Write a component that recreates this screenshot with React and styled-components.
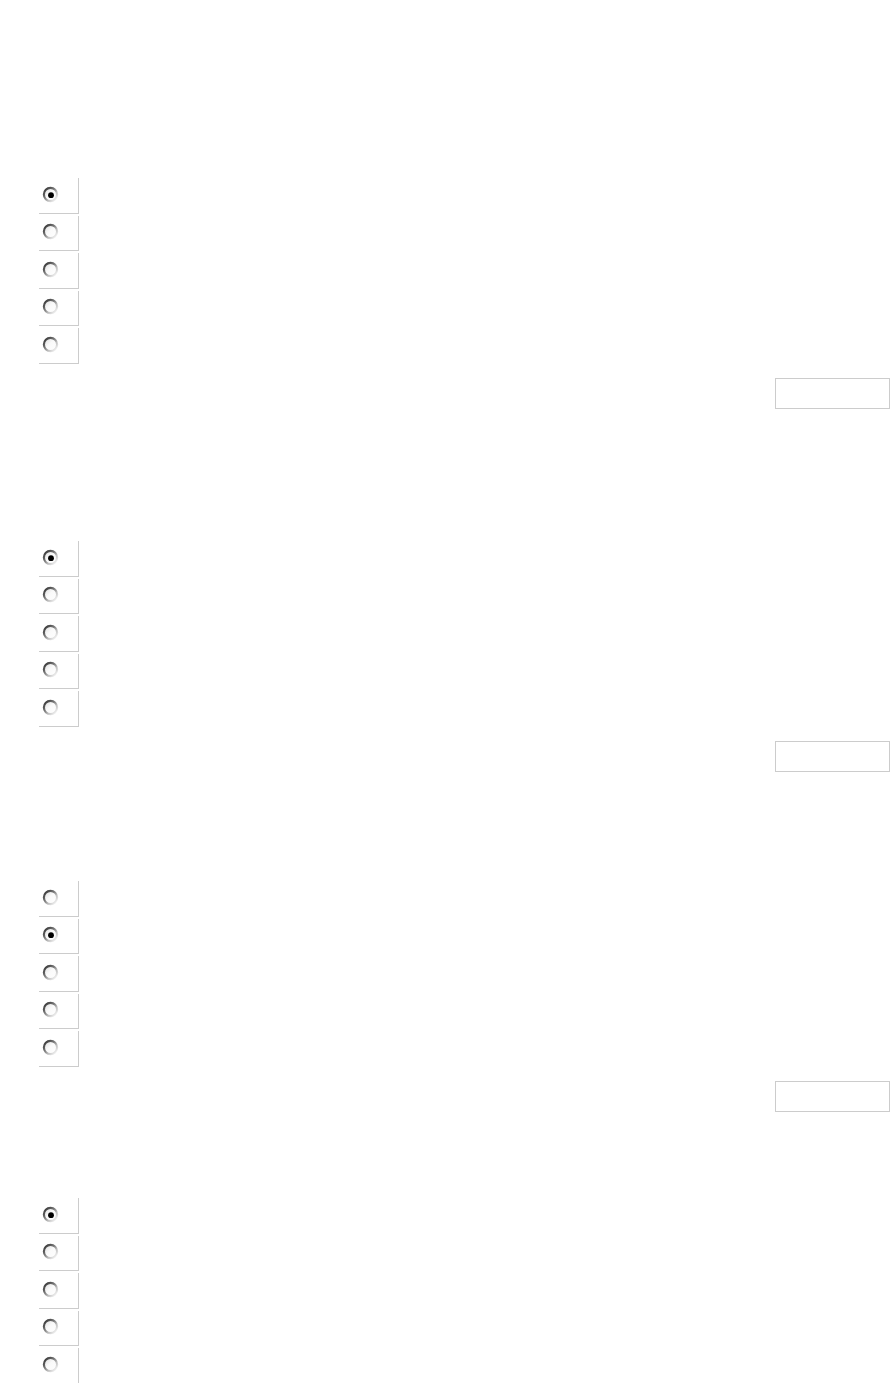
import React from 'react'
import styled, { createGlobalStyle } from 'styled-components'

const GlobalStyle = createGlobalStyle`
  html, body {
    margin: 0;
    padding: 0;
    background: #ffffff;
    font-family: "Liberation Sans", Arial, sans-serif;
  }
`

const Page = styled.div`
  width: 893px;
  box-sizing: border-box;
  padding: 0 3px 0 39px;
  display: flex;
  flex-direction: column;
`

const Question = styled.section`
  margin-top: ${p => p.$gap}px;
  display: flex;
  flex-direction: column;
`

const Options = styled.div`
  display: flex;
  flex-direction: column;
  gap: 2px;
`

const OptionCell = styled.label`
  width: 40px;
  height: 35.5px;
  box-sizing: border-box;
  border-right: 1px solid #cccccc;
  border-bottom: 1px solid #cccccc;
  display: flex;
  align-items: flex-start;
  padding: 7.5px 0 0 3px;
  cursor: pointer;
`

const Actions = styled.div`
  margin-top: 14.5px;
  display: flex;
  justify-content: flex-end;
`

const SubmitBox = styled.button`
  width: 115px;
  height: 31px;
  box-sizing: border-box;
  border: 1px solid #cccccc;
  background: #ffffff;
  padding: 0;
`

const RadioMark = ({ checked, id }) => (
  <svg width="17" height="17" viewBox="0 0 17 17">
    <defs>
      <linearGradient id={`ring-${id}`} x1="0.1" y1="0.1" x2="0.9" y2="0.9">
        <stop offset="0" stopColor="#3c3c3c" />
        <stop offset="0.4" stopColor="#7a7a7a" />
        <stop offset="0.7" stopColor="#c4c4c4" />
        <stop offset="1" stopColor="#f0f0f0" />
      </linearGradient>
      <linearGradient id={`fill-${id}`} x1="0" y1="0" x2="1" y2="1">
        <stop offset="0" stopColor="#d8d8d8" />
        <stop offset="0.45" stopColor="#fafafa" />
        <stop offset="1" stopColor="#ffffff" />
      </linearGradient>
    </defs>
    <circle cx="8.5" cy="8.5" r="6.6" fill={`url(#fill-${id})`} stroke={`url(#ring-${id})`} strokeWidth="2.2" />
    {checked && <circle cx="9" cy="9.2" r="2.9" fill="#000000" />}
  </svg>
)

const questions = [
  { gap: 178, selected: 0, button: true },
  { gap: 132, selected: 0, button: true },
  { gap: 109, selected: 1, button: true },
  { gap: 86, selected: 0, button: false },
]

export default function App () {
  return (
    <>
      <GlobalStyle />
      <Page>
        {questions.map((q, qi) => (
          <Question key={qi} $gap={q.gap}>
            <Options>
              {[0, 1, 2, 3, 4].map(i => (
                <OptionCell key={i}>
                  <RadioMark checked={q.selected === i} id={`${qi}-${i}`} />
                </OptionCell>
              ))}
            </Options>
            {q.button && (
              <Actions>
                <SubmitBox type="button" />
              </Actions>
            )}
          </Question>
        ))}
      </Page>
    </>
  )
}
